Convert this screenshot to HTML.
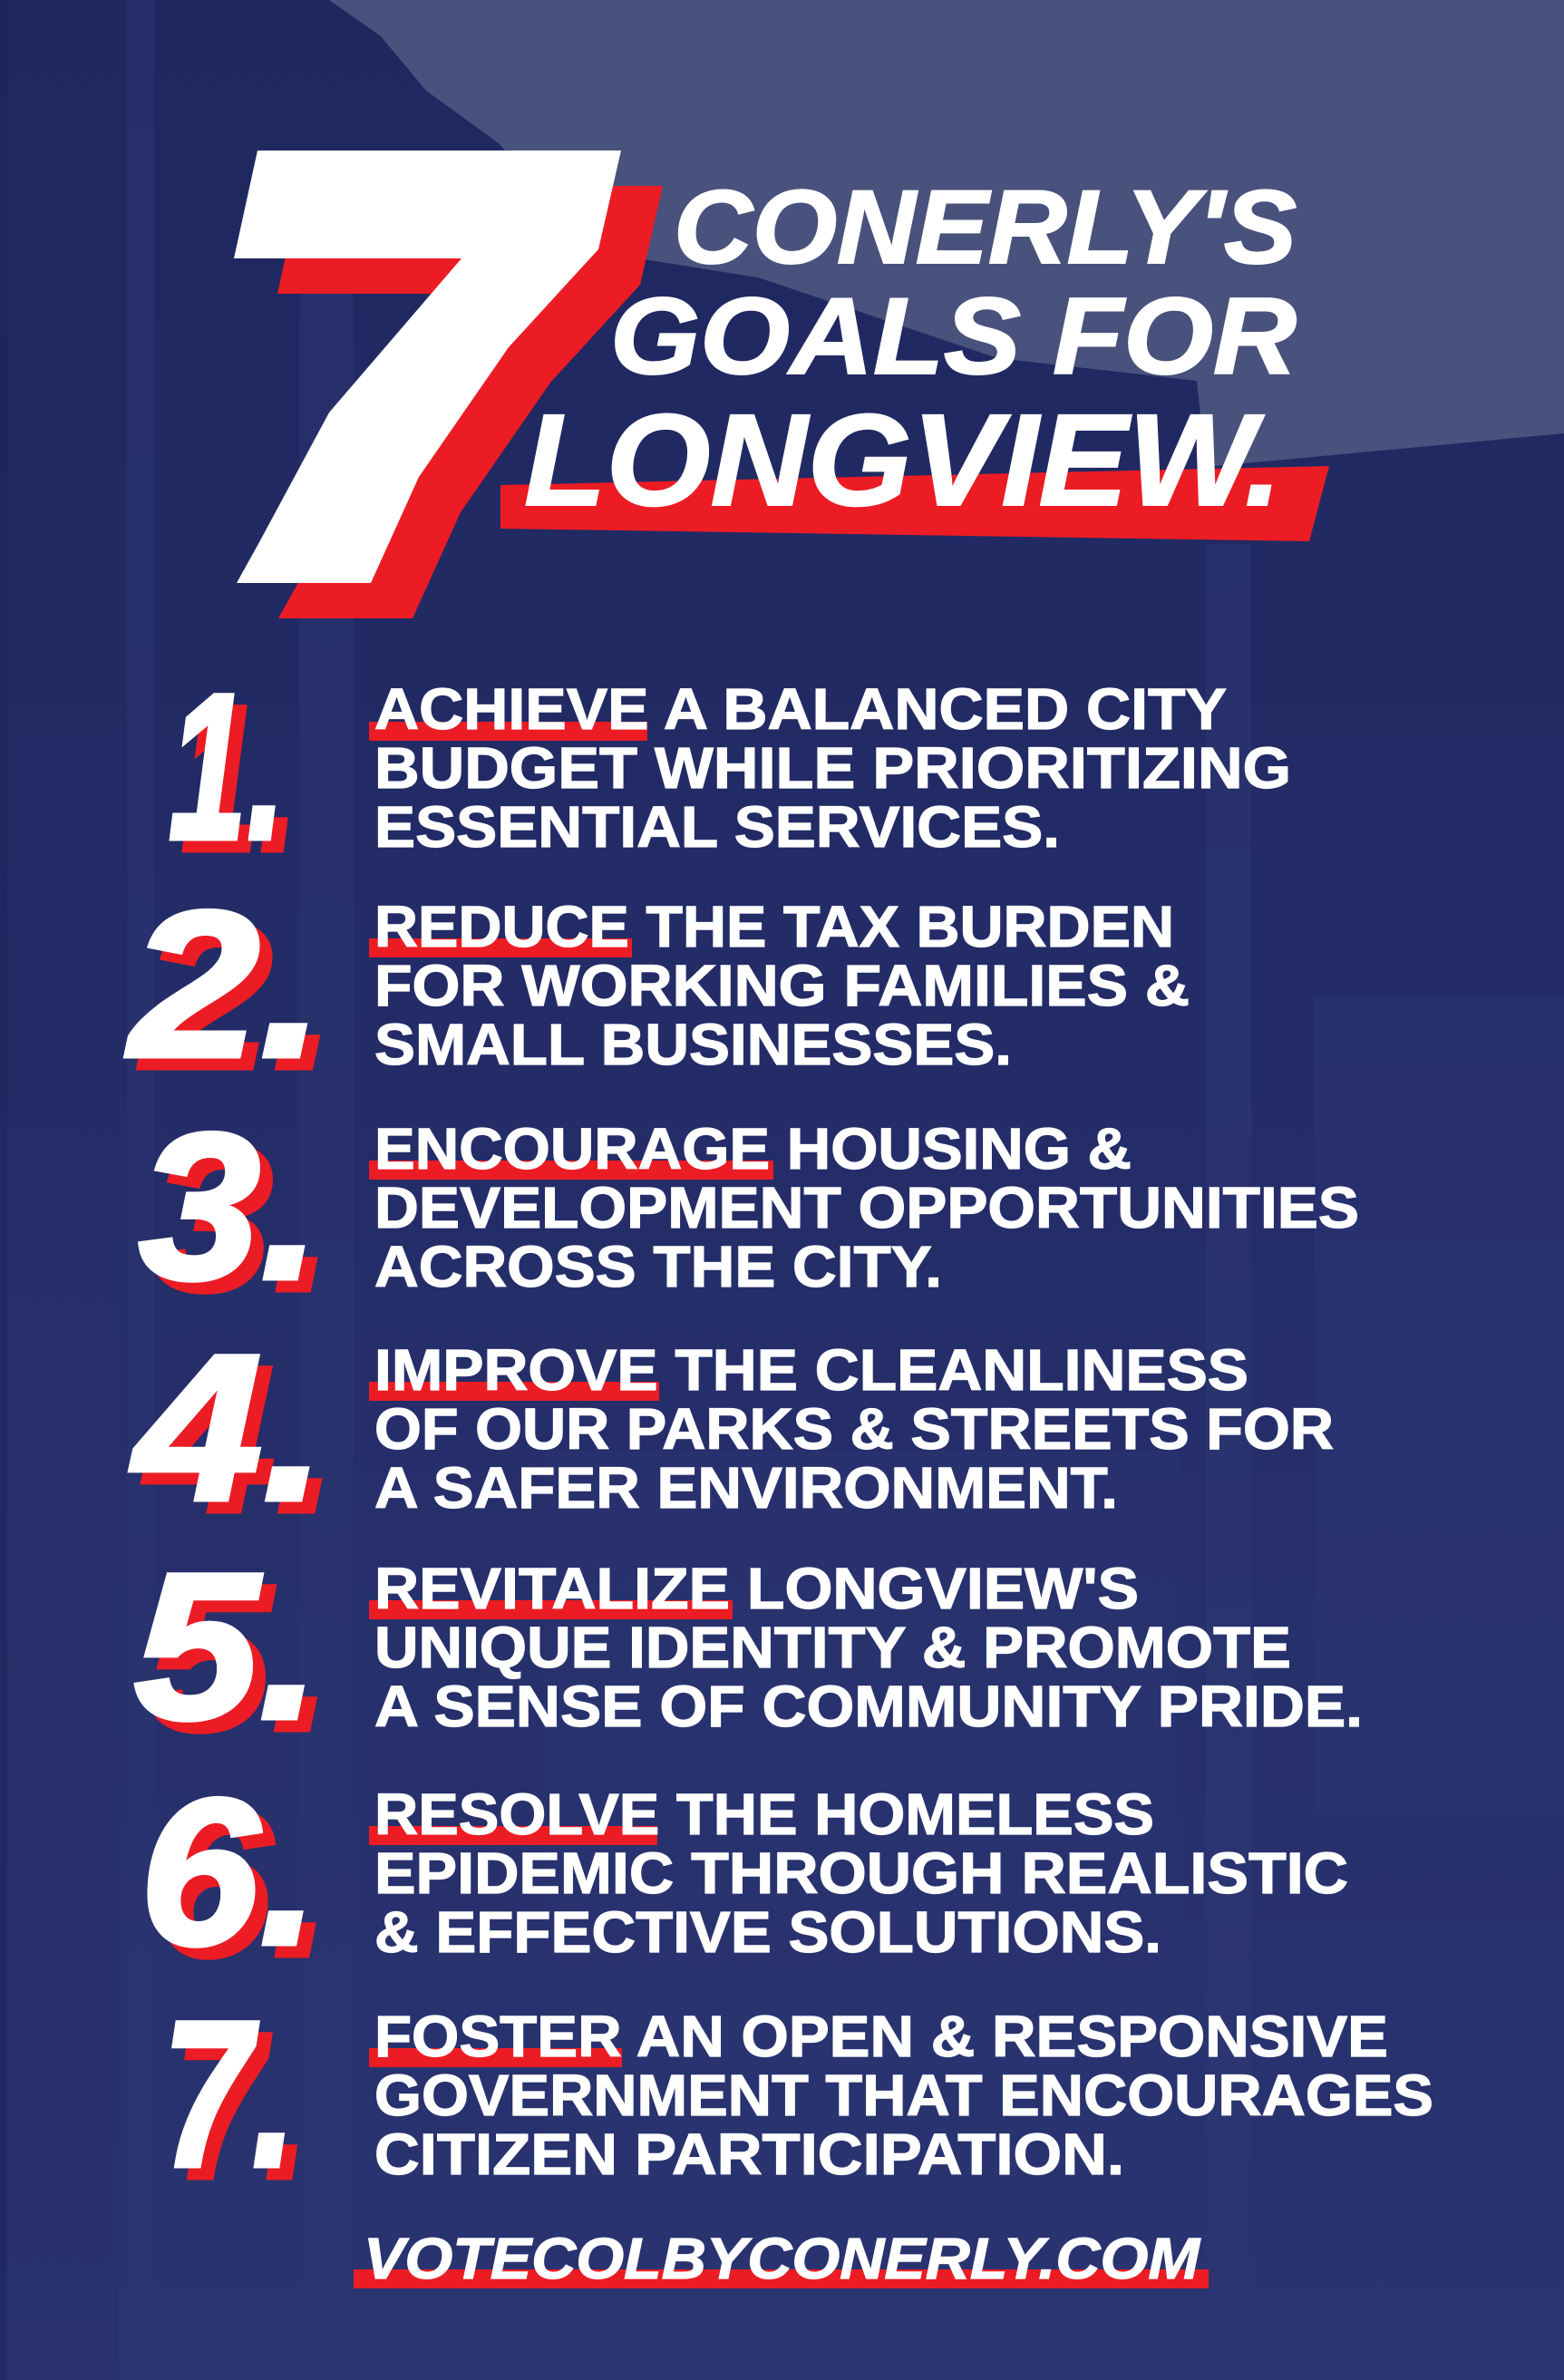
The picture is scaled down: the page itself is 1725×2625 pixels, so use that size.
<!DOCTYPE html>
<html><head><meta charset="utf-8"><style>
html,body{margin:0;padding:0;background:#222b64;}
svg{display:block}
text{font-family:"Liberation Sans",sans-serif;font-weight:bold;}
</style></head><body>
<svg width="1725" height="2625" viewBox="0 0 1725 2625" xmlns="http://www.w3.org/2000/svg">
<defs>
<linearGradient id="bg" x1="0" y1="0" x2="0" y2="1">
<stop offset="0" stop-color="#1f275f"/><stop offset="0.5" stop-color="#242d68"/><stop offset="1" stop-color="#2a3470"/>
</linearGradient>
</defs>
<rect width="1725" height="2625" fill="url(#bg)"/>
<g opacity="0.5">
<rect x="140" y="0" width="30" height="2625" fill="#2c3672"/>
<rect x="330" y="300" width="60" height="2325" fill="#2b3571"/>
<rect x="0" y="1300" width="130" height="1325" fill="#27306b"/>
<rect x="1330" y="600" width="50" height="2025" fill="#2e3874"/>
<rect x="1450" y="1100" width="275" height="900" fill="#2c3672"/>
<rect x="600" y="1600" width="700" height="800" fill="#2a3470"/>
</g>
<rect x="0" y="0" width="8" height="2625" fill="#1b2258" opacity="0.5"/>
<polygon points="363,0 1725,0 1725,478 1330,515 1320,420 1100,395 836,306 704,285 600,215 550,158 470,100 420,40" fill="#48527c"/>

<path d="M332,205 L731,205 L706,314 L607,422 L508,565 L455,682 L307,682 L332,637 L409,494 L555,324 L306,324 Z" fill="#ec1c24"/>
<path d="M284,166 L685,166 L660,275 L561,383 L462,526 L409,643 L261,643 L286,598 L363,455 L509,285 L258,285 Z" fill="#fff"/>

<polygon points="552,535 1466,514 1444,597 552,583" fill="#ec1c24"/>

<g fill="#fff" stroke="#fff" stroke-width="2" font-style="italic">
<text x="743" y="290" font-size="115" textLength="687" lengthAdjust="spacingAndGlyphs">CONERLY'S</text>
<text x="673" y="412" font-size="120" textLength="757" lengthAdjust="spacingAndGlyphs">GOALS FOR</text>
<text x="578" y="557" font-size="144" textLength="836" lengthAdjust="spacingAndGlyphs">LONGVIEW.</text>
</g>

<g fill="#ec1c24">
<rect x="407" y="796" width="307" height="21"/>
<rect x="407" y="1035" width="290" height="21"/>
<rect x="407" y="1280" width="446" height="21"/>
<rect x="407" y="1524" width="320" height="21"/>
<rect x="407" y="1765" width="401" height="21"/>
<rect x="407" y="2014" width="318" height="21"/>
<rect x="407" y="2259" width="279" height="21"/>
<rect x="390" y="2503" width="943" height="21"/>
</g>

<g font-style="italic" font-size="230">
<g fill="#ec1c24" stroke="#ec1c24" stroke-width="5">
<text x="200" y="938" textLength="129" lengthAdjust="spacingAndGlyphs">1.</text>
<text x="157" y="1178" textLength="215" lengthAdjust="spacingAndGlyphs">2.</text>
<text x="167" y="1423" textLength="201" lengthAdjust="spacingAndGlyphs">3.</text>
<text x="162" y="1667" textLength="212" lengthAdjust="spacingAndGlyphs">4.</text>
<text x="162" y="1908" textLength="206" lengthAdjust="spacingAndGlyphs">5.</text>
<text x="168" y="2157" textLength="198" lengthAdjust="spacingAndGlyphs">6.</text>
<text x="193" y="2402" textLength="148" lengthAdjust="spacingAndGlyphs">7.</text>
</g>
<g fill="#fff" stroke="#fff" stroke-width="5">
<text x="186" y="925" textLength="129" lengthAdjust="spacingAndGlyphs">1.</text>
<text x="143" y="1165" textLength="215" lengthAdjust="spacingAndGlyphs">2.</text>
<text x="153" y="1410" textLength="201" lengthAdjust="spacingAndGlyphs">3.</text>
<text x="148" y="1654" textLength="212" lengthAdjust="spacingAndGlyphs">4.</text>
<text x="148" y="1895" textLength="206" lengthAdjust="spacingAndGlyphs">5.</text>
<text x="154" y="2144" textLength="198" lengthAdjust="spacingAndGlyphs">6.</text>
<text x="179" y="2389" textLength="148" lengthAdjust="spacingAndGlyphs">7.</text>
</g>
</g>

<g fill="#fff" stroke="#fff" stroke-width="1.2" font-size="64">
<text x="413" y="804" textLength="940" lengthAdjust="spacingAndGlyphs">ACHIEVE A BALANCED CITY</text>
<text x="413" y="869" textLength="1011" lengthAdjust="spacingAndGlyphs">BUDGET WHILE PRIORITIZING</text>
<text x="413" y="934" textLength="756" lengthAdjust="spacingAndGlyphs">ESSENTIAL SERVICES.</text>

<text x="413" y="1044" textLength="882" lengthAdjust="spacingAndGlyphs">REDUCE THE TAX BURDEN</text>
<text x="413" y="1109" textLength="899" lengthAdjust="spacingAndGlyphs">FOR WORKING FAMILIES &amp;</text>
<text x="413" y="1174" textLength="703" lengthAdjust="spacingAndGlyphs">SMALL BUSINESSES.</text>

<text x="413" y="1289" textLength="835" lengthAdjust="spacingAndGlyphs">ENCOURAGE HOUSING &amp;</text>
<text x="413" y="1354" textLength="1086" lengthAdjust="spacingAndGlyphs">DEVELOPMENT OPPORTUNITIES</text>
<text x="413" y="1419" textLength="626" lengthAdjust="spacingAndGlyphs">ACROSS THE CITY.</text>

<text x="413" y="1533" textLength="964" lengthAdjust="spacingAndGlyphs">IMPROVE THE CLEANLINESS</text>
<text x="413" y="1598" textLength="1058" lengthAdjust="spacingAndGlyphs">OF OUR PARKS &amp; STREETS FOR</text>
<text x="413" y="1663" textLength="820" lengthAdjust="spacingAndGlyphs">A SAFER ENVIRONMENT.</text>

<text x="413" y="1774" textLength="843" lengthAdjust="spacingAndGlyphs">REVITALIZE LONGVIEW'S</text>
<text x="413" y="1839" textLength="1011" lengthAdjust="spacingAndGlyphs">UNIQUE IDENTITY &amp; PROMOTE</text>
<text x="413" y="1904" textLength="1090" lengthAdjust="spacingAndGlyphs">A SENSE OF COMMUNITY PRIDE.</text>

<text x="413" y="2023" textLength="860" lengthAdjust="spacingAndGlyphs">RESOLVE THE HOMELESS</text>
<text x="413" y="2088" textLength="1074" lengthAdjust="spacingAndGlyphs">EPIDEMIC THROUGH REALISTIC</text>
<text x="413" y="2153" textLength="868" lengthAdjust="spacingAndGlyphs">&amp; EFFECTIVE SOLUTIONS.</text>

<text x="413" y="2268" textLength="1118" lengthAdjust="spacingAndGlyphs">FOSTER AN OPEN &amp; RESPONSIVE</text>
<text x="413" y="2333" textLength="1168" lengthAdjust="spacingAndGlyphs">GOVERNMENT THAT ENCOURAGES</text>
<text x="413" y="2398" textLength="827" lengthAdjust="spacingAndGlyphs">CITIZEN PARTICIPATION.</text>
</g>

<text x="401" y="2513" fill="#fff" stroke="#fff" stroke-width="1.2" font-style="italic" font-size="64" textLength="922" lengthAdjust="spacingAndGlyphs">VOTECOLBYCONERLY.COM</text>
</svg>
</body></html>
